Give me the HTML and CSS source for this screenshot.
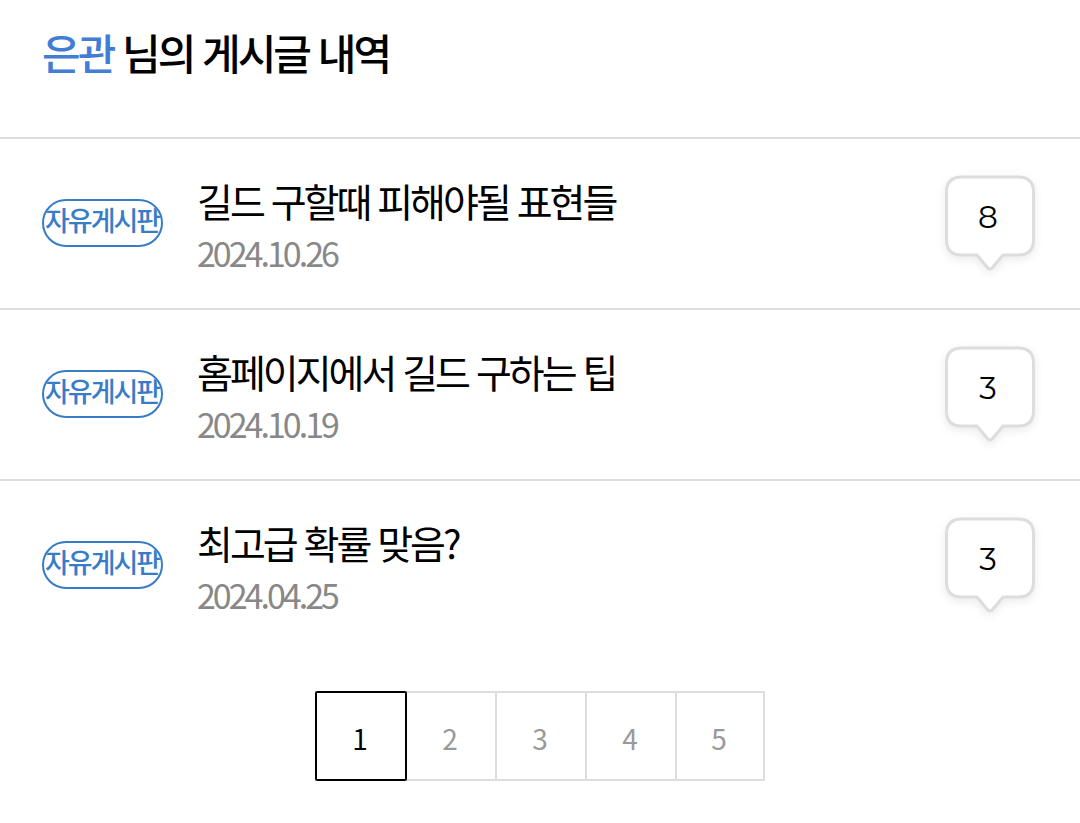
FILE: index.html
```
<!DOCTYPE html>
<html lang="ko">
  <head>
    <meta charset="UTF-8" />
    <meta name="viewport" content="width=device-width, initial-scale=1.0" />
    <title>게시글 내역</title>
    <link rel="stylesheet" href="styles.css" />
  </head>
  <body>
    <header class="header">
      <h1><span class="nickname">은관</span> 님의 게시글 내역</h1>
    </header>
    <ul class="post-list">
      <li class="post">
        <span class="badge">자유게시판</span>
        <div class="post-text">
          <a class="post-title" href="#">길드 구할때 피해야될 표현들</a>
          <span class="post-date">2024.10.26</span>
        </div>
        <a class="comments" href="#">
          <svg class="bubble" viewBox="0 0 90 98" aria-hidden="true">
            <path d="M17 2H73Q88.500 2 88.500 17V65Q88.500 80 73 80H58L48 92Q45 96 42 92L32 80H17Q1.500 80 1.500 65V17Q1.500 2 17 2Z" />
          </svg>
          <span class="count">8</span>
        </a>
      </li>
      <li class="post">
        <span class="badge">자유게시판</span>
        <div class="post-text">
          <a class="post-title" href="#">홈페이지에서 길드 구하는 팁</a>
          <span class="post-date">2024.10.19</span>
        </div>
        <a class="comments" href="#">
          <svg class="bubble" viewBox="0 0 90 98" aria-hidden="true">
            <path d="M17 2H73Q88.500 2 88.500 17V65Q88.500 80 73 80H58L48 92Q45 96 42 92L32 80H17Q1.500 80 1.500 65V17Q1.500 2 17 2Z" />
          </svg>
          <span class="count">3</span>
        </a>
      </li>
      <li class="post">
        <span class="badge">자유게시판</span>
        <div class="post-text">
          <a class="post-title" href="#">최고급 확률 맞음?</a>
          <span class="post-date">2024.04.25</span>
        </div>
        <a class="comments" href="#">
          <svg class="bubble" viewBox="0 0 90 98" aria-hidden="true">
            <path d="M17 2H73Q88.500 2 88.500 17V65Q88.500 80 73 80H58L48 92Q45 96 42 92L32 80H17Q1.500 80 1.500 65V17Q1.500 2 17 2Z" />
          </svg>
          <span class="count">3</span>
        </a>
      </li>
    </ul>
    <nav class="paging">
      <a class="page active" href="#">1</a>
      <a class="page" href="#">2</a>
      <a class="page" href="#">3</a>
      <a class="page" href="#">4</a>
      <a class="page" href="#">5</a>
    </nav>
  </body>
</html>
```
FILE: styles.css
```
* {
  margin: 0;
  padding: 0;
  box-sizing: border-box;
}
body {
  background: #fff;
  color: #000;
  font-family: "Noto Sans CJK KR", sans-serif;
  letter-spacing: -3px;
}
a {
  color: inherit;
  text-decoration: none;
}
.header {
  padding: 21px 42px 54px;
}
h1 {
  font-size: 42px;
  font-weight: 500;
  line-height: 62px;
}
.nickname {
  color: #427dd5;
}
.post-list {
  list-style: none;
}
.post {
  display: flex;
  align-items: flex-start;
  padding: 36px 45px 28px 42px;
  border-top: 2px solid #ddd;
}
.badge {
  flex: none;
  width: 121px;
  height: 48px;
  margin-top: 24px;
  padding-left: 1px;
  border: 2px solid #387cc8;
  border-radius: 24px;
  color: #387cc8;
  font-size: 27px;
  font-weight: 500;
  letter-spacing: -2px;
  line-height: 38px;
  white-space: nowrap;
  overflow: hidden;
}
.post-text {
  flex: 1;
  display: flex;
  flex-direction: column;
  margin-left: 34px;
}
.post-title {
  font-size: 39px;
  line-height: 50px;
}
.post-date {
  color: #888;
  font-size: 34px;
  line-height: 55px;
}
.comments {
  position: relative;
  width: 90px;
  height: 98px;
}
.bubble {
  display: block;
  width: 90px;
  height: 98px;
  overflow: visible;
  fill: #fff;
  stroke: #ddd;
  stroke-width: 3;
  filter: drop-shadow(0 3px 4px rgba(0, 0, 0, 0.08));
}
.count {
  position: absolute;
  top: 0;
  left: 0;
  width: 100%;
  padding-right: 4px;
  font-family: Montserrat, "Noto Sans CJK KR", sans-serif;
  font-size: 31px;
  letter-spacing: 0;
  line-height: 85px;
  text-align: center;
}
.paging {
  display: flex;
  justify-content: center;
  padding: 41px 0;
  letter-spacing: 0;
}
.page {
  width: 90px;
  height: 90px;
  padding-right: 2px;
  border: 2px solid #ddd;
  border-right: none;
  color: #999;
  font-size: 28px;
  line-height: 90px;
  text-align: center;
}
.page:last-child {
  border-right: 2px solid #ddd;
}
.page.active {
  z-index: 1;
  width: 92px;
  margin-right: -2px;
  border: 2px solid #000;
  border-radius: 2px;
  color: #000;
}
```
